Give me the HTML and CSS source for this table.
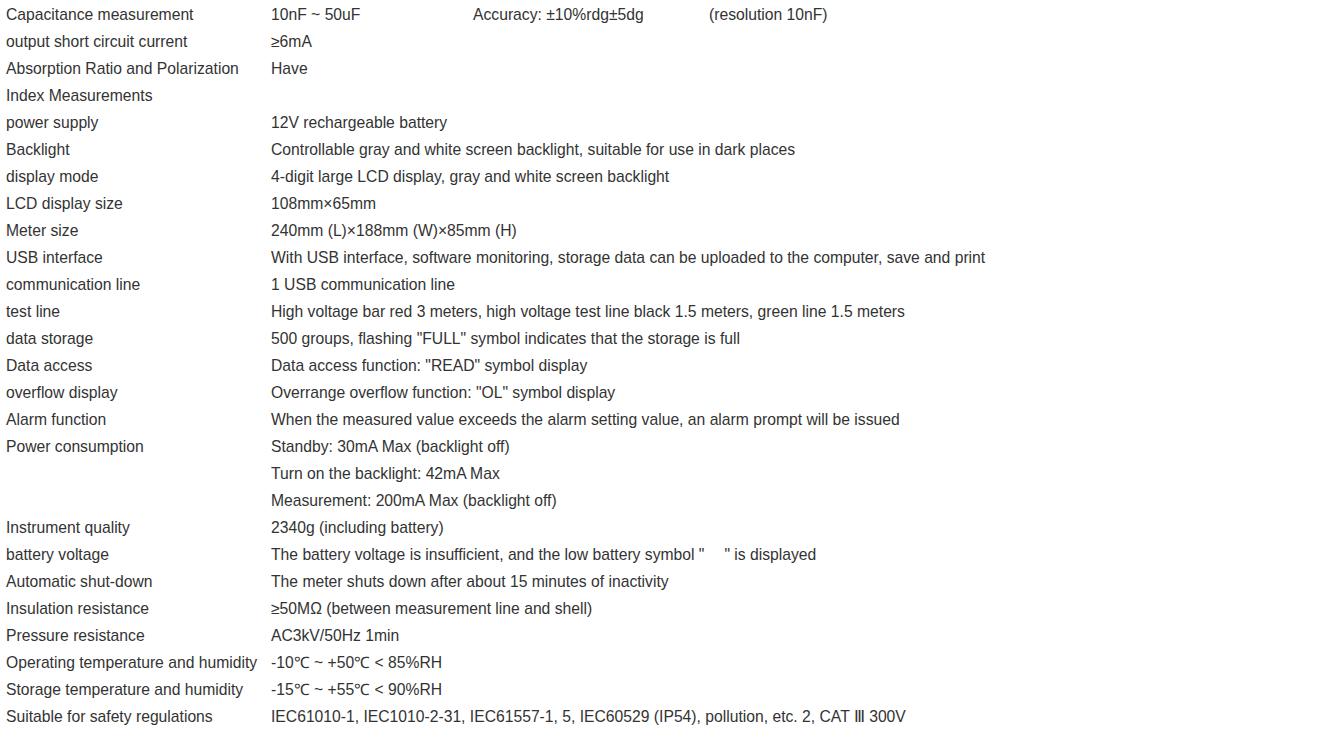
FILE: index.html
```html
<!DOCTYPE html>
<html lang="en">
<head>
  <meta charset="UTF-8">
  <meta name="viewport" content="width=device-width, initial-scale=1.0">
  <title>Specifications</title>
  <link rel="stylesheet" href="styles.css">
</head>
<body>
  <table class="specs">
    <tbody>
      <tr>
        <td>Capacitance measurement</td>
        <td><span class="range">10nF ~ 50uF</span><span class="accuracy">Accuracy: ±10%rdg±5dg</span><span>(resolution 10nF)</span></td>
      </tr>
      <tr>
        <td>output short circuit current</td>
        <td>≥6mA</td>
      </tr>
      <tr>
        <td>Absorption Ratio and Polarization Index Measurements</td>
        <td>Have</td>
      </tr>
      <tr>
        <td>power supply</td>
        <td>12V rechargeable battery</td>
      </tr>
      <tr>
        <td>Backlight</td>
        <td>Controllable gray and white screen backlight, suitable for use in dark places</td>
      </tr>
      <tr>
        <td>display mode</td>
        <td>4-digit large LCD display, gray and white screen backlight</td>
      </tr>
      <tr>
        <td>LCD display size</td>
        <td>108mm×65mm</td>
      </tr>
      <tr>
        <td>Meter size</td>
        <td>240mm (L)×188mm (W)×85mm (H)</td>
      </tr>
      <tr>
        <td>USB interface</td>
        <td>With USB interface, software monitoring, storage data can be uploaded to the computer, save and print</td>
      </tr>
      <tr>
        <td>communication line</td>
        <td>1 USB communication line</td>
      </tr>
      <tr>
        <td>test line</td>
        <td>High voltage bar red 3 meters, high voltage test line black 1.5 meters, green line 1.5 meters</td>
      </tr>
      <tr>
        <td>data storage</td>
        <td>500 groups, flashing "FULL" symbol indicates that the storage is full</td>
      </tr>
      <tr>
        <td>Data access</td>
        <td>Data access function: "READ" symbol display</td>
      </tr>
      <tr>
        <td>overflow display</td>
        <td>Overrange overflow function: "OL" symbol display</td>
      </tr>
      <tr>
        <td>Alarm function</td>
        <td>When the measured value exceeds the alarm setting value, an alarm prompt will be issued</td>
      </tr>
      <tr>
        <td>Power consumption</td>
        <td>Standby: 30mA Max (backlight off)<br>Turn on the backlight: 42mA Max<br>Measurement: 200mA Max (backlight off)</td>
      </tr>
      <tr>
        <td>Instrument quality</td>
        <td>2340g (including battery)</td>
      </tr>
      <tr>
        <td>battery voltage</td>
        <td>The battery voltage is insufficient, and the low battery symbol "<span class="symbol"></span>" is displayed</td>
      </tr>
      <tr>
        <td>Automatic shut-down</td>
        <td>The meter shuts down after about 15 minutes of inactivity</td>
      </tr>
      <tr>
        <td>Insulation resistance</td>
        <td>≥50MΩ (between measurement line and shell)</td>
      </tr>
      <tr>
        <td>Pressure resistance</td>
        <td>AC3kV/50Hz 1min</td>
      </tr>
      <tr>
        <td>Operating temperature and humidity</td>
        <td>-10℃ ~ +50℃ &lt; 85%RH</td>
      </tr>
      <tr>
        <td>Storage temperature and humidity</td>
        <td>-15℃ ~ +55℃ &lt; 90%RH</td>
      </tr>
      <tr>
        <td>Suitable for safety regulations</td>
        <td>IEC61010-1, IEC1010-2-31, IEC61557-1, 5, IEC60529 (IP54), pollution, etc. 2, CAT Ⅲ 300V</td>
      </tr>
    </tbody>
  </table>
</body>
</html>
```

FILE: styles.css
```css
body {
  margin: 0;
  padding-top: 1px;
  background: #fff;
  font-family: "Liberation Sans", Arial, sans-serif;
  font-size: 15.7px;
  color: #333;
}
.specs {
  border-collapse: collapse;
  table-layout: fixed;
  width: 1150px;
}
.specs td {
  padding: 0 0 0 6px;
  line-height: 27px;
  vertical-align: top;
}
.specs td:first-child {
  width: 259px;
}
.range {
  display: inline-block;
  width: 202px;
}
.accuracy {
  display: inline-block;
  width: 236px;
}
.symbol {
  display: inline-block;
  width: 20px;
}
```
